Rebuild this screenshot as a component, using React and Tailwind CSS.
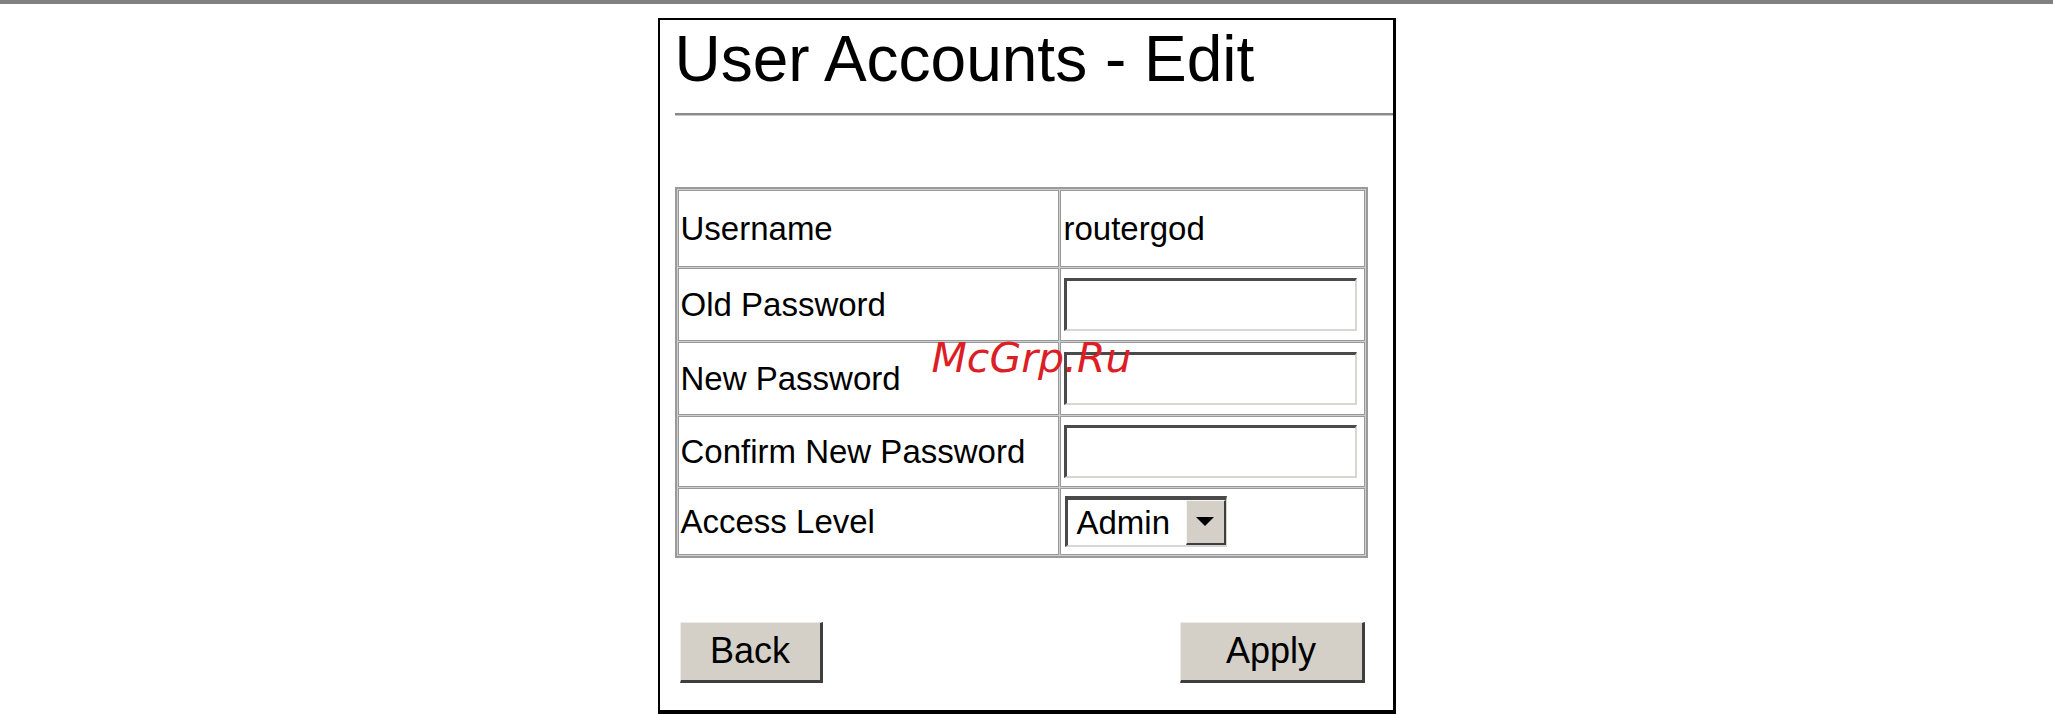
import React from "react";

const font = { fontFamily: '"Liberation Sans", Arial, sans-serif' };

function Inset({ className = "", children }) {
  return (
    <div
      className={
        "bg-white border-t-[3px] border-l-[3px] border-t-[#4a4a4a] border-l-[#4a4a4a] border-r-2 border-b-2 border-r-[#d8d6d0] border-b-[#d8d6d0] " +
        className
      }
    >
      {children}
    </div>
  );
}

function Row({ h, label, children }) {
  return (
    <div className={"grid grid-cols-[381px_305px] gap-[1px] " + h}>
      <div className="bg-white border border-[#999999] flex items-center pl-[2px] text-[33px] leading-none text-black">
        {label}
      </div>
      <div className="bg-white border border-[#999999] flex items-center pl-[3px] text-[33px] leading-none text-black">
        {children}
      </div>
    </div>
  );
}

function Btn({ w, children }) {
  return (
    <div
      className={
        "h-[61px] bg-[#d4d0c8] border-t border-l border-t-[#eeece8] border-l-[#eeece8] border-r-[3px] border-b-[3px] border-r-[#3e3e3e] border-b-[#3e3e3e] flex items-center justify-center pb-[2px] text-[36px] leading-none text-black " +
        w
      }
    >
      {children}
    </div>
  );
}

export default function App() {
  return (
    <div className="w-[2053px] h-[714px] bg-white overflow-hidden" style={font}>
      <div className="h-[4px] bg-[#808080]" />
      <div className="relative mx-auto mt-[14px] w-[738px] border-t-2 border-l-2 border-r-[3px] border-b-4 border-black pl-[15px] pt-[8px] pb-[27px]">
        <div className="h-[63px] text-[64px] leading-[63px] text-black whitespace-nowrap">
          User Accounts - Edit
        </div>
        <div className="mt-[22px] border-t-2 border-b border-t-[#8a8a8a] border-b-[#c8c8c8]" />
        <div className="mt-[71px] w-[693px] border-2 border-[#9a9a9a] p-[1px] bg-[#cfcfcf] flex flex-col gap-[1px]">
          <Row h="h-[77px]" label="Username">routergod</Row>
          <Row h="h-[73px]" label="Old Password">
            <Inset className="w-[293px] h-[53px]" />
          </Row>
          <Row h="h-[73px]" label="New Password">
            <Inset className="w-[293px] h-[53px]" />
          </Row>
          <Row h="h-[71px]" label="Confirm New Password">
            <Inset className="w-[293px] h-[53px]" />
          </Row>
          <Row h="h-[67px]" label="Access Level">
            <div className="ml-[1px] w-[162px] h-[51px] bg-white border-t-[4px] border-l-[3px] border-t-[#4a4a4a] border-l-[#4a4a4a] border-b-2 border-r border-b-[#d8d6d0] border-r-[#d8d6d0] flex items-stretch">
              <div className="flex-1 flex items-center pl-[9px] text-[33px] leading-none">Admin</div>
              <div className="w-[40px] bg-[#d4d0c8] border-t border-l border-t-[#f4f4f4] border-l-[#f4f4f4] border-r-2 border-b-2 border-r-[#3e3e3e] border-b-[#3e3e3e] flex items-center justify-center">
                <svg width="18" height="10" viewBox="0 0 18 10">
                  <polygon points="0,0 18,0 9,9" fill="#000" />
                </svg>
              </div>
            </div>
          </Row>
        </div>
        <div className="mt-[64px] flex justify-between pl-[5px] pr-[28px]">
          <Btn w="w-[143px]">Back</Btn>
          <Btn w="w-[185px]">Apply</Btn>
        </div>
        <div
          className="absolute left-[272px] top-[318px] text-[41px] leading-none italic text-[#dc1f26] whitespace-nowrap"
          style={{ fontFamily: '"DejaVu Sans", sans-serif' }}
        >
          McGrp.Ru
        </div>
      </div>
    </div>
  );
}
